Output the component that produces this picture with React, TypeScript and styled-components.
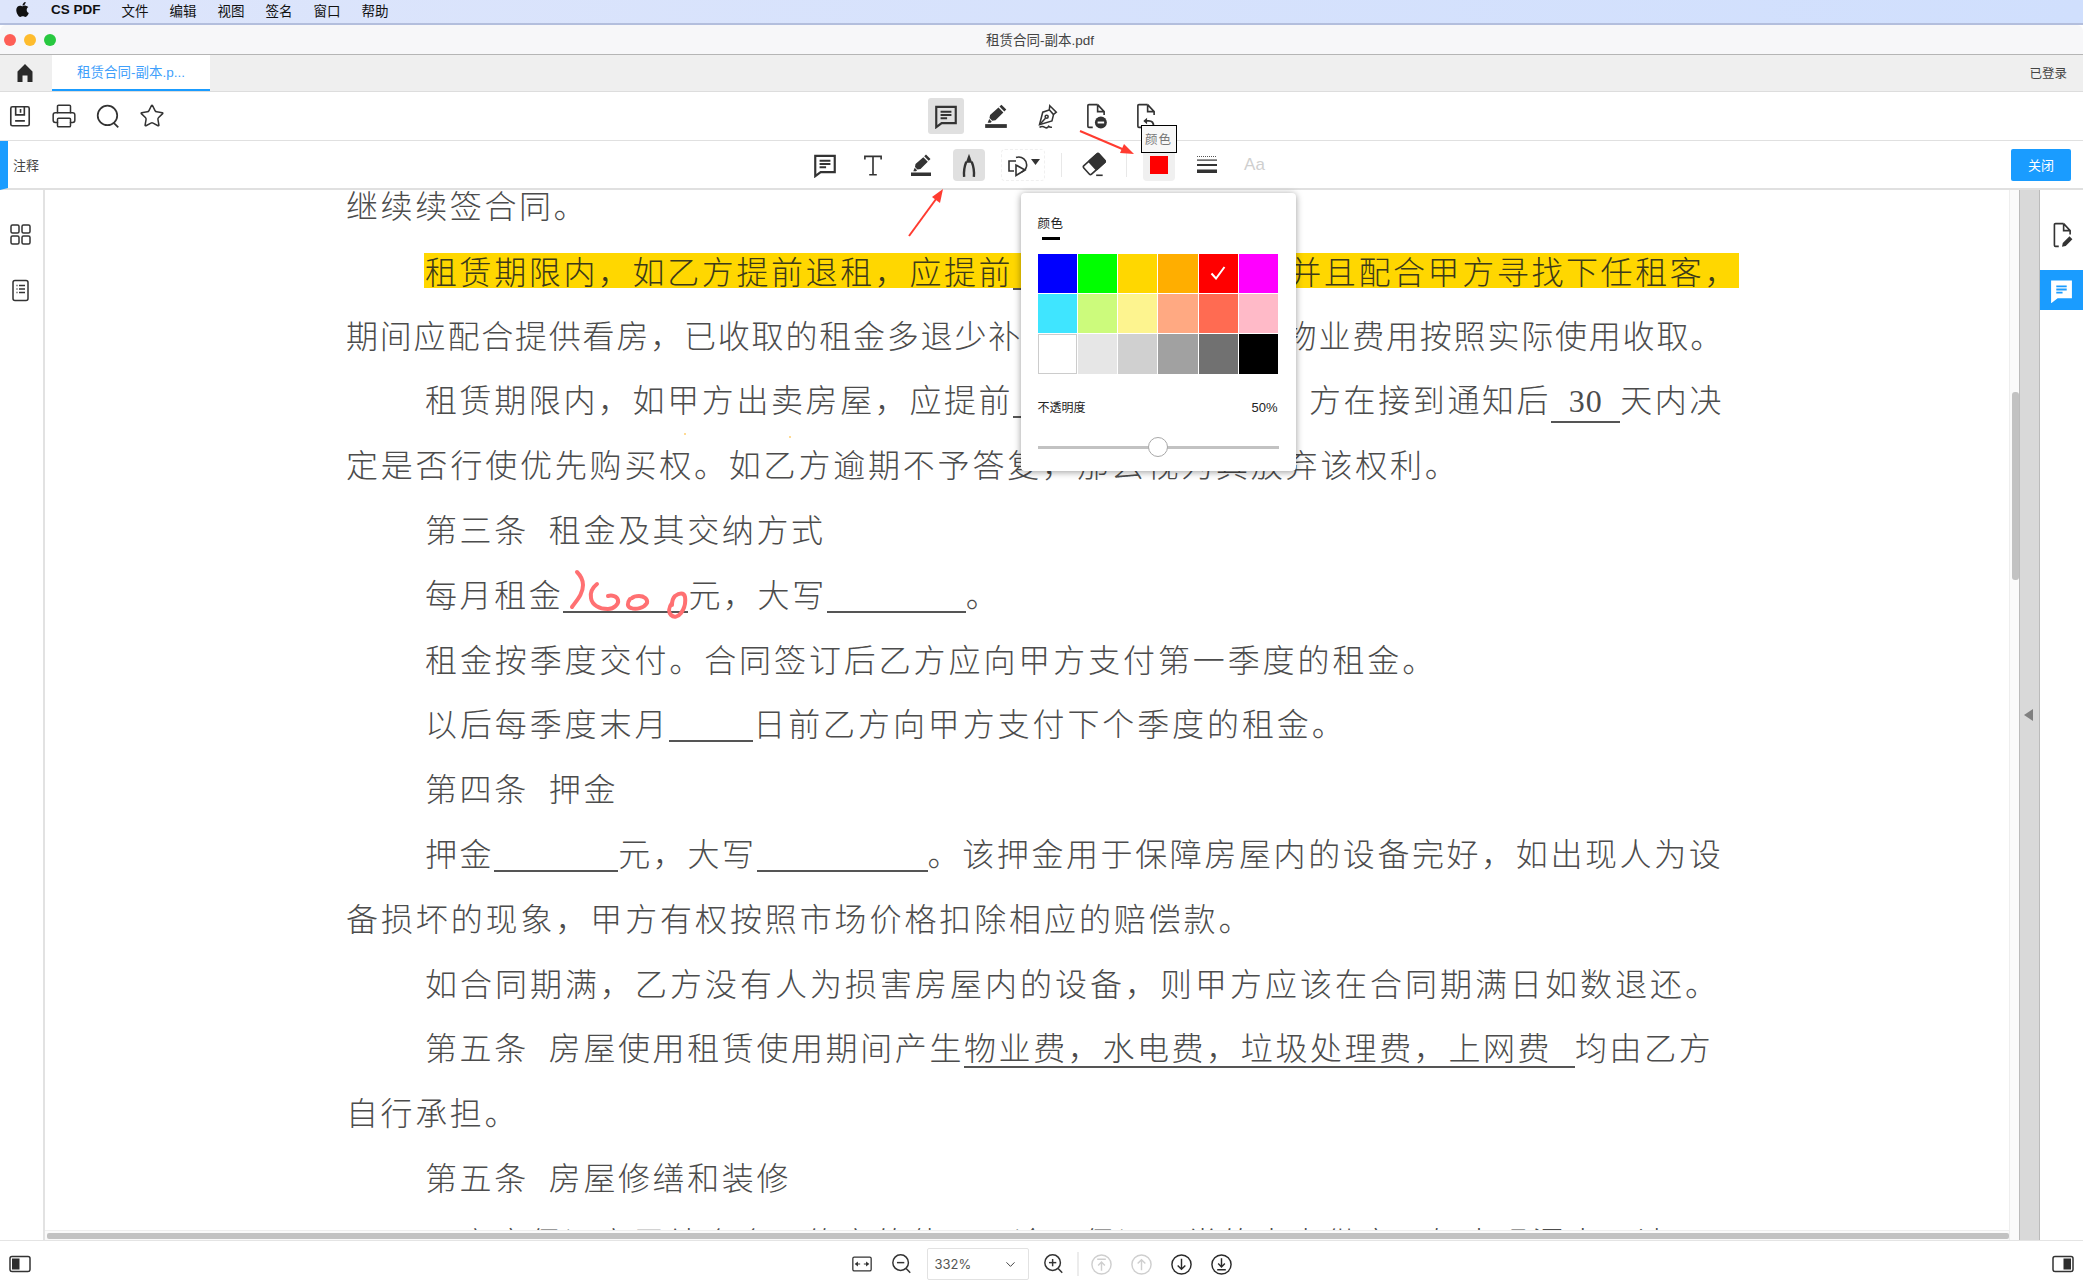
import React from 'react';
import styled, { createGlobalStyle } from 'styled-components';
import { FaApple } from 'react-icons/fa';
import { ChevronDown, Printer, Star } from 'lucide-react';

const GlobalStyle = createGlobalStyle`
  html, body {
    margin: 0;
    padding: 0;
    background: #fff;
  }
  * {
    box-sizing: border-box;
  }
`;

const UI_FONT = `"Liberation Sans", "Noto Sans CJK SC", sans-serif`;

const Page = styled.div`
  position: relative;
  width: 2083px;
  height: 1284px;
  overflow: hidden;
  display: flex;
  flex-direction: column;
  font-family: ${UI_FONT};
  color: #333;
  background: #fff;
`;

const MenuBar = styled.div`
  height: 25px;
  flex: none;
  display: flex;
  align-items: center;
  gap: 21px;
  padding: 0 0 4px 14px;
  background: linear-gradient(90deg, #dde5fb, #d0dffd);
  border-bottom: 2px solid #b3bedd;
  font-size: 13.5px;
  color: #111;
`;

const MenuBrand = styled.span`
  font-weight: 700;
  font-size: 13.5px;
  margin: 0 0 0 -1px;
`;

const TitleBar = styled.div`
  position: relative;
  height: 30px;
  flex: none;
  display: flex;
  align-items: center;
  justify-content: center;
  padding: 0 3px 2px 0;
  background: #f7f7f9;
  border-bottom: 1px solid #b5b5b5;
  border-radius: 6px 6px 0 0;
  font-size: 13.5px;
  color: #444;
`;

const Lights = styled.div`
  position: absolute;
  left: 4px;
  top: 9px;
  display: flex;
  gap: 8px;
`;

const Light = styled.span<{ $color: string }>`
  width: 12px;
  height: 12px;
  border-radius: 50%;
  background: ${({ $color }) => $color};
`;

const TabBar = styled.div`
  height: 37px;
  flex: none;
  display: flex;
  align-items: stretch;
  background: #efefef;
  border-bottom: 1px solid #ddd;
`;

const HomeSlot = styled.div`
  width: 52px;
  display: flex;
  align-items: center;
  justify-content: center;
  padding-right: 3px;
`;

const Tab = styled.div`
  width: 158px;
  display: flex;
  align-items: center;
  justify-content: center;
  padding-bottom: 2px;
  background: #fff;
  border-bottom: 2px solid #1a9cff;
  color: #3f9ffb;
  font-size: 13.5px;
`;

const TabRight = styled.div`
  margin-left: auto;
  padding: 0 16px 1px 0;
  display: flex;
  align-items: center;
  font-size: 12.5px;
  color: #444;
`;

const Toolbar = styled.div`
  height: 49px;
  flex: none;
  display: grid;
  grid-template-columns: 1fr auto 1fr;
  align-items: center;
  border-bottom: 1px solid #e0e0e0;
`;

const FileTools = styled.div`
  display: flex;
  gap: 18px;
  padding-left: 7px;
`;

const ModeTools = styled.div`
  display: flex;
  gap: 14px;
  margin: 0 0 0 8px;
`;

const ModeButton = styled.div<{ $active?: boolean }>`
  width: 36px;
  height: 36px;
  display: flex;
  align-items: center;
  justify-content: center;
  border-radius: 3px;
  background: ${({ $active }) => ($active ? '#e0e0e0' : 'transparent')};
`;

const AnnotBar = styled.div`
  height: 49px;
  flex: none;
  display: grid;
  grid-template-columns: 1fr auto 1fr;
  align-items: center;
  border-left: 8px solid #1a9cff;
  border-bottom: 2px solid #e0e0e0;
`;

const AnnotLabel = styled.div`
  padding-left: 5px;
  font-size: 13px;
  color: #444;
`;

const AnnotTools = styled.div`
  display: flex;
  align-items: center;
  gap: 16px;
  margin-right: 12px;
`;

const AnnotButton = styled.div<{ $active?: boolean; $wide?: boolean; $tint?: string }>`
  position: relative;
  width: ${({ $wide }) => ($wide ? 44 : 32)}px;
  height: 32px;
  display: flex;
  align-items: center;
  justify-content: center;
  gap: 1px;
  border-radius: 4px;
  background: ${({ $active, $tint }) => $tint || ($active ? '#e0e0e0' : 'transparent')};
  border: ${({ $wide }) => ($wide ? '1px dashed #f0f0f0' : 'none')};
`;

const ToolSeparator = styled.div`
  width: 1px;
  height: 24px;
  background: #e8e8e8;
`;

const FontHint = styled.span`
  font-size: 17px;
  color: #cfcfcf;
`;

const ColorChip = styled.span`
  width: 18px;
  height: 18px;
  background: #ff0000;
`;

const Tooltip = styled.div`
  position: absolute;
  left: -2px;
  top: -24px;
  width: 36px;
  height: 28px;
  display: flex;
  align-items: center;
  justify-content: center;
  border: 1px solid #000;
  background: #f8f8f8;
  font-size: 12.5px;
  letter-spacing: 1px;
  color: #777;
  z-index: 4;
`;

const CloseButton = styled.div`
  justify-self: end;
  margin-right: 12px;
  width: 60px;
  height: 32px;
  display: flex;
  align-items: center;
  justify-content: center;
  border-radius: 2px;
  background: #1a9cff;
  color: #fff;
  font-size: 13px;
`;

const Popover = styled.div`
  position: absolute;
  left: -122px;
  top: 44px;
  width: 275px;
  height: 278px;
  padding: 22px 17px 0;
  background: #fff;
  border-radius: 4px;
  box-shadow: 0 1px 7px rgba(0, 0, 0, 0.4);
  z-index: 3;
`;

const PopoverTitle = styled.div`
  font-size: 12.5px;
  line-height: 18px;
  letter-spacing: 0.5px;
  color: #222;
`;

const TitleMark = styled.div`
  width: 18px;
  height: 3px;
  margin: 4px 0 14px 4px;
  background: #000;
`;

const SwatchGrid = styled.div`
  width: 241px;
  display: grid;
  grid-template-columns: repeat(6, 1fr);
  grid-auto-rows: 39.4px;
  gap: 1px;
`;

const Swatch = styled.div<{ $color: string; $outlined?: boolean }>`
  display: flex;
  align-items: center;
  justify-content: center;
  background: ${({ $color }) => $color};
  border: ${({ $outlined }) => ($outlined ? '1px solid #ccc' : 'none')};
`;

const OpacityRow = styled.div`
  display: flex;
  justify-content: space-between;
  margin: 25px 1px 0 0;
  font-size: 12px;
  line-height: 18px;
  color: #222;
`;

const OpacityValue = styled.span`
  font-size: 13px;
  font-weight: 500;
`;

const SliderTrack = styled.div`
  position: relative;
  height: 3px;
  margin-top: 29px;
  background: #c2c2c2;
`;

const SliderThumb = styled.div<{ $value: number }>`
  position: absolute;
  left: ${({ $value }) => $value}%;
  top: -9px;
  width: 20px;
  height: 20px;
  margin-left: -10px;
  border-radius: 50%;
  background: #fff;
  border: 1px solid #a8a8a8;
`;

const Main = styled.div`
  flex: 1;
  min-height: 0;
  display: flex;
`;

const LeftRail = styled.div`
  width: 45px;
  flex: none;
  display: flex;
  flex-direction: column;
  gap: 32px;
  padding: 32px 10px 0 8px;
  border-right: 2px solid #e2e2e2;
`;

const DocColumn = styled.div`
  flex: 1;
  min-width: 0;
  display: flex;
  flex-direction: column;
`;

const DocViewport = styled.div`
  flex: 1;
  min-height: 0;
  overflow: hidden;
  padding-left: 301px;
  font-family: "Noto Sans CJK SC", sans-serif;
  font-weight: 300;
  font-size: 32px;
  color: #4c4c4c;
`;

const DocText = styled.div`
  margin-top: -18px;
`;

const Line = styled.div<{ $indent?: boolean; $split?: boolean; $spacing?: number }>`
  display: flow-root;
  position: relative;
  height: 64.8px;
  line-height: 64.8px;
  white-space: nowrap;
  letter-spacing: ${({ $spacing }) => $spacing ?? 2.6}px;
  padding-left: ${({ $indent }) => ($indent ? 79 : 0)}px;
  ${({ $split }) => ($split ? 'display: flex; justify-content: space-between; width: 1378px;' : '')}
`;

const Highlight = styled.div`
  display: flex;
  justify-content: space-between;
  width: 1315px;
  height: 35px;
  margin: 16px 0 0 -1px;
  padding-left: 1px;
  background: #ffd700;
  line-height: 34px;
  color: #3c3a1a;
`;

const Blank = styled.span<{ $width: number }>`
  position: relative;
  display: inline-block;
  width: ${({ $width }) => $width}px;
  height: 2px;
  vertical-align: -6px;
  background: #555;
`;

const Filled = styled.span<{ $width?: number }>`
  display: inline-block;
  ${({ $width }) => ($width ? `width: ${$width}px;` : '')}
  line-height: 40px;
  border-bottom: 2px solid #555;
`;

const Digits = styled(Filled)`
  font-family: "Liberation Serif", serif;
  font-weight: 400;
  letter-spacing: 1px;
  text-align: center;
`;

const TitleGap = styled.span`
  display: inline-block;
  width: 20px;
`;

const Ink = styled.svg`
  position: absolute;
  left: 0;
  bottom: -8px;
`;

const HTrack = styled.div`
  height: 10px;
  flex: none;
  padding: 2px 0 1px 2px;
  background: #fafafa;
  border-top: 1px solid #eee;
`;

const HThumb = styled.div`
  height: 100%;
  border-radius: 2px;
  background: #c2c2c2;
`;

const Gutter = styled.div`
  width: 10px;
  flex: none;
  padding: 202px 0 0 2px;
  background: #fafafa;
  border-left: 1px solid #eee;
`;

const VThumb = styled.div`
  height: 188px;
  border-radius: 3px;
  background: #c2c2c2;
`;

const Splitter = styled.div`
  width: 21px;
  flex: none;
  display: flex;
  align-items: center;
  justify-content: center;
  background: #d9d9d9;
  border-left: 1px solid #bbb;
  border-right: 1px solid #bbb;
`;

const Collapse = styled.span`
  width: 0;
  height: 0;
  margin-right: 2px;
  border-top: 6px solid transparent;
  border-bottom: 6px solid transparent;
  border-right: 9px solid #808080;
`;

const RightRail = styled.div`
  width: 43px;
  flex: none;
  display: flex;
  flex-direction: column;
  align-items: center;
  padding-top: 32px;
  gap: 22px;
`;

const RailTile = styled.div`
  width: 100%;
  height: 40px;
  display: flex;
  align-items: center;
  justify-content: center;
  background: #1a9cff;
`;

const StatusBar = styled.div`
  height: 44px;
  flex: none;
  display: grid;
  grid-template-columns: 1fr auto 1fr;
  align-items: center;
  padding: 3px 9px 0 9px;
  border-top: 1px solid #e4e4e4;
`;

const ZoomTools = styled.div`
  display: flex;
  align-items: center;
  gap: 10px;
`;

const ZoomButton = styled.div`
  width: 30px;
  height: 30px;
  display: flex;
  align-items: center;
  justify-content: center;
`;

const ZoomSelect = styled.div`
  width: 102px;
  height: 32px;
  display: flex;
  align-items: center;
  justify-content: space-between;
  padding: 0 10px 0 7px;
  border: 1px solid #e2e2e2;
  border-radius: 2px;
  font-family: Inter, sans-serif;
  font-size: 13px;
  color: #555;
`;

const ZoomSeparator = styled.div`
  width: 2px;
  height: 24px;
  margin: 0 -2px;
  background: #ececec;
`;

const PanelRight = styled.div`
  justify-self: end;
  display: flex;
`;

const ArrowLayer = styled.svg`
  position: absolute;
  left: 0;
  top: 0;
  pointer-events: none;
  z-index: 5;
`;

const ICON = '#333';

// document text uses full-width commas
const zh = (text: string) => text.replace(/,/g, '\uFF0C');

const Svg = ({ size = 24, color = ICON, width = 1.6, children }: {
  size?: number; color?: string; width?: number; children: React.ReactNode;
}) => (
  <svg
    width={size}
    height={size}
    viewBox="0 0 24 24"
    fill="none"
    stroke={color}
    strokeWidth={width}
    style={{ display: 'block', flex: 'none' }}
  >
    {children}
  </svg>
);

const CommentIcon = ({ size = 26, color = ICON, fill = false }: { size?: number; color?: string; fill?: boolean }) => (
  <Svg size={size} color={color} width={2}>
    <path d="M3 3.5h18v15H8l-5 3.800z" fill={fill ? color : 'none'} />
    <path d="M7 8h10M7 11h10M7 14h6" stroke={fill ? '#1a9cff' : color} strokeWidth={1.8} />
  </Svg>
);

const HighlighterIcon = ({ size = 26 }: { size?: number }) => (
  <Svg size={size} width={0}>
    <rect x="2" y="19.5" width="20" height="3.5" fill={ICON} />
    <path d="M17 1.5l4.500 4.500-1.800 1.800-4.500-4.500z M14.300 4.200l4.500 4.500-7.300 7.300-3 .4-2.500-2.500.5-2.900z M5.700 14.800l2.400 2.400-1.100 1H4.300z" fill={ICON} />
  </Svg>
);

const NibIcon = () => (
  <Svg size={26} width={1.4}>
    <path d="M15.5 2.5l6 6-2.500 2-1.500 6L6 20l3-11.500 6-2z" />
    <path d="M14.8 6l4 4.500M6 20l5.500-6" />
    <circle cx="12.6" cy="12.6" r="1.4" />
    <path d="M6 22.500c2-1.500 3.500-1 5 0s2.500.5 3.500-1c.6.8 1.400 1 3 .8" />
  </Svg>
);

const FileBase = () => (
  <>
    <path d="M13.5 1.5H5.500a1 1 0 0 0-1 1v19a1 1 0 0 0 1 1H9" />
    <path d="M13.5 1.5l6 6.500v3M13.5 1.5V8h6" />
  </>
);

const FileMinusIcon = () => (
  <Svg size={26} width={1.5}>
    <FileBase />
    <circle cx="16.5" cy="18" r="5.5" fill={ICON} stroke="none" />
    <path d="M13.5 18h6" stroke="#fff" strokeWidth={1.8} />
  </Svg>
);

const FileUndoIcon = () => (
  <Svg size={26} width={1.5}>
    <FileBase />
    <path d="M13 13.500l-3.500 3 3.500 3z" fill={ICON} stroke="none" />
    <path d="M12 16.500h2.500c2.800 0 4.500 2 4.500 5" strokeWidth={1.7} />
  </Svg>
);

const FileEditIcon = () => (
  <Svg size={26} width={1.5}>
    <path d="M13.5 1.5H6a1 1 0 0 0-1 1v19a1 1 0 0 0 1 1h3" />
    <path d="M13.5 1.5l6 6.500v3.500M13.5 1.5V8h6" />
    <path d="M12 22.800l.7-3.400 6.200-6.200 2.700 2.700-6.200 6.200z" fill={ICON} stroke="none" />
  </Svg>
);

const TextIcon = () => (
  <Svg size={26} width={1.5}>
    <path d="M4.5 7V4h15v3M12 4v17M8.5 21h7" />
  </Svg>
);

const PenToolIcon = () => (
  <Svg size={26} width={2.2}>
    <path d="M12 1.5l3 8.500H9z" fill={ICON} stroke="none" />
    <path d="M9.5 9C7.500 14 7 18 7.500 23M14.500 9c2 5 2.500 9 2 14" />
  </Svg>
);

const ShapesIcon = () => (
  <Svg size={24} width={1.6}>
    <path d="M10 8H3v10h5" />
    <path d="M10 4.500a8 8 0 0 1 10.500 9 8 8 0 0 1-5 5.500" />
    <path d="M10 12v10.500l9-5.500z" />
  </Svg>
);

const Caret = () => (
  <svg width="9" height="6" viewBox="0 0 9 6" style={{ display: 'block', flex: 'none', marginBottom: 6 }}>
    <path d="M0 0h9L4.500 6z" fill={ICON} />
  </svg>
);

const EraserIcon = () => (
  <Svg size={26} width={1.5}>
    <g transform="rotate(-42 12 11)">
      <rect x="2.500" y="6" width="19" height="10.500" rx="1.500" />
      <rect x="10" y="6" width="11.500" height="10.500" rx="1" fill={ICON} />
    </g>
    <path d="M14 21.500h6" />
  </Svg>
);

const LineWidthIcon = () => (
  <svg width="20" height="18" viewBox="0 0 20 18" style={{ display: 'block' }}>
    <path d="M0 .5h20" stroke="#555" strokeDasharray="1 1" />
    <rect y="3.500" width="20" height="1.200" fill={ICON} />
    <rect y="8" width="20" height="2" fill={ICON} />
    <rect y="13.500" width="20" height="3.500" fill={ICON} />
  </svg>
);

const HomeIcon = () => (
  <svg width="20" height="20" viewBox="0 0 20 20" style={{ display: 'block' }}>
    <path d="M10 1l7.500 7.500V19h-5v-6.500h-5V19h-5V8.500z" fill="#2a2a2a" />
  </svg>
);

const SaveIcon = () => (
  <Svg size={26} width={1.5}>
    <rect x="3.500" y="3.500" width="17" height="17.500" rx="1.500" />
    <path d="M8 3.500V11h8V3.500M12.500 5.500v3.500M7.500 16.500h9" />
  </Svg>
);

const SearchIcon = () => (
  <Svg size={26} width={1.6}>
    <circle cx="11.500" cy="11.500" r="9" />
    <path d="M17.500 18.500l4 4" />
  </Svg>
);

const ThumbsIcon = () => (
  <Svg size={24} width={1.5}>
    <rect x="3" y="3" width="8" height="8" rx="1.500" />
    <rect x="14" y="3" width="8" height="8" rx="1.500" />
    <rect x="3" y="14" width="8" height="8" rx="1.500" />
    <rect x="14" y="14" width="8" height="8" rx="1.500" />
  </Svg>
);

const OutlineIcon = () => (
  <Svg size={24} width={1.5}>
    <rect x="5" y="2.500" width="15" height="20" rx="2" />
    <path d="M8.500 7.500h1M11 7.500h6M8.500 11h1M11 11h6M8.500 14.500h1M11 14.500h6" />
  </Svg>
);

const FitWidthIcon = () => (
  <Svg size={22} width={1.400}>
    <rect x="2" y="4.500" width="20" height="15" rx="1.500" />
    <path d="M5 12h5M5 12l2-1.500v3zM19 12h-5M19 12l-2-1.500v3z" fill={ICON} strokeWidth={1.100} />
  </Svg>
);

const ZoomIcon = ({ plus }: { plus?: boolean }) => (
  <Svg size={22} width={1.600}>
    <circle cx="10.500" cy="10.500" r="8.500" />
    <path d="M6.500 10.500h8" />
    {plus && <path d="M10.500 6.500v8" />}
    <path d="M16.500 17l4.500 4.500" />
  </Svg>
);

const StepIcon = ({ up, edge, muted }: { up?: boolean; edge?: boolean; muted?: boolean }) => (
  <Svg size={23} color={muted ? '#cfcfcf' : '#2a2a2a'} width={1.500}>
    <circle cx="12" cy="12" r="10" />
    <g transform={up ? 'rotate(180 12 12)' : undefined}>
      <path d={edge ? 'M12 5.500v9M8.500 11l3.500 3.500 3.500-3.500M7.500 17.500h9' : 'M12 6v11M8 13l4 4 4-4'} />
    </g>
  </Svg>
);

const PanelIcon = ({ side }: { side: 'left' | 'right' }) => (
  <svg width="22" height="18" viewBox="0 0 22 18" style={{ display: 'block' }}>
    <rect x="1" y="1.500" width="20" height="15" rx="2" fill="#fff" stroke="#333" strokeWidth="1.500" />
    <rect x={side === 'left' ? 3 : 11.500} y="3.500" width="7.500" height="11" fill="#2d2d2d" />
  </svg>
);

const MENU_ITEMS = ['文件', '编辑', '视图', '签名', '窗口', '帮助'];

const SWATCHES = [
  '#0000ff', '#00ff00', '#ffd700', '#ffae00', '#ff0000', '#ff00ff',
  '#3fe5ff', '#ccfb7c', '#fdf48f', '#ffa982', '#ff6b52', '#ffbac8',
  '#ffffff', '#e6e6e6', '#d0d0d0', '#a1a1a1', '#717171', '#000000',
];

const App = () => (
  <Page>
    <GlobalStyle />

    <MenuBar>
      <FaApple size={17} color="#111" />
      <MenuBrand>CS PDF</MenuBrand>
      {MENU_ITEMS.map(item => <span key={item}>{item}</span>)}
    </MenuBar>

    <TitleBar>
      <Lights>
        <Light $color="#fe5f57" />
        <Light $color="#febc2e" />
        <Light $color="#28c840" />
      </Lights>
      租赁合同-副本.pdf
    </TitleBar>

    <TabBar>
      <HomeSlot><HomeIcon /></HomeSlot>
      <Tab>租赁合同-副本.p...</Tab>
      <TabRight>已登录</TabRight>
    </TabBar>

    <Toolbar>
      <FileTools>
        <SaveIcon />
        <Printer size={26} strokeWidth={1.4} color={ICON} />
        <SearchIcon />
        <Star size={26} strokeWidth={1.4} color={ICON} />
      </FileTools>
      <ModeTools>
        <ModeButton $active><CommentIcon /></ModeButton>
        <ModeButton><HighlighterIcon /></ModeButton>
        <ModeButton><NibIcon /></ModeButton>
        <ModeButton><FileMinusIcon /></ModeButton>
        <ModeButton><FileUndoIcon /></ModeButton>
      </ModeTools>
      <div />
    </Toolbar>

    <AnnotBar>
      <AnnotLabel>注释</AnnotLabel>
      <AnnotTools>
        <AnnotButton><CommentIcon /></AnnotButton>
        <AnnotButton><TextIcon /></AnnotButton>
        <AnnotButton><HighlighterIcon size={24} /></AnnotButton>
        <AnnotButton $active><PenToolIcon /></AnnotButton>
        <AnnotButton $wide><ShapesIcon /><Caret /></AnnotButton>
        <ToolSeparator />
        <AnnotButton><EraserIcon /></AnnotButton>
        <ToolSeparator />
        <AnnotButton $tint="#f0f0f0">
          <ColorChip />
          <Tooltip>颜色</Tooltip>
          <Popover>
            <PopoverTitle>颜色</PopoverTitle>
            <TitleMark />
            <SwatchGrid>
              {SWATCHES.map(color => (
                <Swatch key={color} $color={color} $outlined={color === '#ffffff'}>
                  {color === '#ff0000' && (
                    <svg width="16" height="14" viewBox="0 0 16 14">
                      <path d="M1.500 7.500L6 12.500 14.500 1" fill="none" stroke="#fff" strokeWidth="2" />
                    </svg>
                  )}
                </Swatch>
              ))}
            </SwatchGrid>
            <OpacityRow>
              <span>不透明度</span>
              <OpacityValue>50%</OpacityValue>
            </OpacityRow>
            <SliderTrack>
              <SliderThumb $value={50} />
            </SliderTrack>
          </Popover>
        </AnnotButton>
        <AnnotButton><LineWidthIcon /></AnnotButton>
        <AnnotButton><FontHint>Aa</FontHint></AnnotButton>
      </AnnotTools>
      <CloseButton>关闭</CloseButton>
    </AnnotBar>

    <Main>
      <LeftRail>
        <ThumbsIcon />
        <OutlineIcon />
      </LeftRail>

      <DocColumn>
        <DocViewport>
          <DocText>
            <Line>继续续签合同。</Line>
            <Line $indent>
              <Highlight>
                <span>{zh('租赁期限内,如乙方提前退租,应提前')}<Blank $width={14} /></span>
                <span>{zh('并且配合甲方寻找下任租客,')}</span>
              </Highlight>
            </Line>
            <Line $split $spacing={1.8}>
              <span>{zh('期间应配合提供看房,已收取的租金多退少补')}</span>
              <span>物业费用按照实际使用收取。</span>
            </Line>
            <Line $split $indent>
              <span>{zh('租赁期限内,如甲方出卖房屋,应提前')}<Blank $width={14} /></span>
              <span>方在接到通知后<Digits $width={69}>30</Digits>天内决</span>
            </Line>
            <Line $spacing={2.8}>{zh('定是否行使优先购买权。如乙方逾期不予答复,那么视为其放弃该权利。')}</Line>
            <Line $indent>第三条<TitleGap />租金及其交纳方式</Line>
            <Line $indent>
              每月租金
              <Blank $width={125}>
                <Ink width="125" height="60" viewBox="0 0 125 60" fill="none" stroke="#ff7072" strokeWidth="4" strokeLinecap="round" strokeLinejoin="round">
                  <path d="M14 11c4 4 6 9 6 13 0 9-6 15-11 22" />
                  <path d="M34 23c-5 4-7 9-6 14 1 7 8 11 17 11 6 0 11-5 10-9-1-4-6-5-10-4" />
                  <path d="M67 38c-3 4-3 8 1 9 5 2 13 0 16-5 1-4-3-7-8-7-3 0-6 1-7 2" />
                  <path d="M109 42c-3 4-4 9-1 12 3 3 7 2 10-2 3-4 5-9 4-16-1-5-6-4-10-1-2 2-3 5-3 9" />
                </Ink>
              </Blank>
              {zh('元,大写')}<Blank $width={139} />。
            </Line>
            <Line $indent $spacing={2.9}>租金按季度交付。合同签订后乙方应向甲方支付第一季度的租金。</Line>
            <Line $indent $spacing={2.9}>以后每季度末月<Blank $width={84} />日前乙方向甲方支付下个季度的租金。</Line>
            <Line $indent>第四条<TitleGap />押金</Line>
            <Line $indent>押金<Blank $width={124} />{zh('元,大写')}<Blank $width={171} />{zh('。该押金用于保障房屋内的设备完好,如出现人为设')}</Line>
            <Line $spacing={2.9}>{zh('备损坏的现象,甲方有权按照市场价格扣除相应的赔偿款。')}</Line>
            <Line $indent $spacing={3}>{zh('如合同期满,乙方没有人为损害房屋内的设备,则甲方应该在合同期满日如数退还。')}</Line>
            <Line $indent>第五条<TitleGap />房屋使用租赁使用期间产生<Filled $width={611}>{zh('物业费,水电费,垃圾处理费,上网费')}</Filled>均由乙方</Line>
            <Line>自行承担。</Line>
            <Line $indent>第五条<TitleGap />房屋修缮和装修</Line>
            <Line $indent>{zh('甲方应保证房屋结合合同约定的使用用途,保证正常的水电供应,如出现漏水,请及')}</Line>
          </DocText>
        </DocViewport>
        <HTrack><HThumb /></HTrack>
      </DocColumn>

      <Gutter><VThumb /></Gutter>
      <Splitter><Collapse /></Splitter>

      <RightRail>
        <FileEditIcon />
        <RailTile><CommentIcon size={25} color="#fff" fill /></RailTile>
      </RightRail>
    </Main>

    <StatusBar>
      <PanelIcon side="left" />
      <ZoomTools>
        <ZoomButton><FitWidthIcon /></ZoomButton>
        <ZoomButton><ZoomIcon /></ZoomButton>
        <ZoomSelect>332%<ChevronDown size={15} strokeWidth={1.6} color="#444" /></ZoomSelect>
        <ZoomButton><ZoomIcon plus /></ZoomButton>
        <ZoomSeparator />
        <ZoomButton><StepIcon up edge muted /></ZoomButton>
        <ZoomButton><StepIcon up muted /></ZoomButton>
        <ZoomButton><StepIcon /></ZoomButton>
        <ZoomButton><StepIcon edge /></ZoomButton>
      </ZoomTools>
      <PanelRight><PanelIcon side="right" /></PanelRight>
    </StatusBar>

    <ArrowLayer width="2083" height="1284" viewBox="0 0 2083 1284">
      <path d="M1080 131L1127 151" stroke="#ff3b30" strokeWidth="2" />
      <path d="M1134 154l-14-1 4-9z" fill="#ff3b30" />
      <path d="M909 236L939 195" stroke="#ff3b30" strokeWidth="2" />
      <path d="M943 189l-3 14-8-6z" fill="#ff3b30" />
      <circle cx="685" cy="434" r="1" fill="#ffcf70" />
      <circle cx="790" cy="437" r="1" fill="#ffcf70" />
    </ArrowLayer>
  </Page>
);

export default App;
